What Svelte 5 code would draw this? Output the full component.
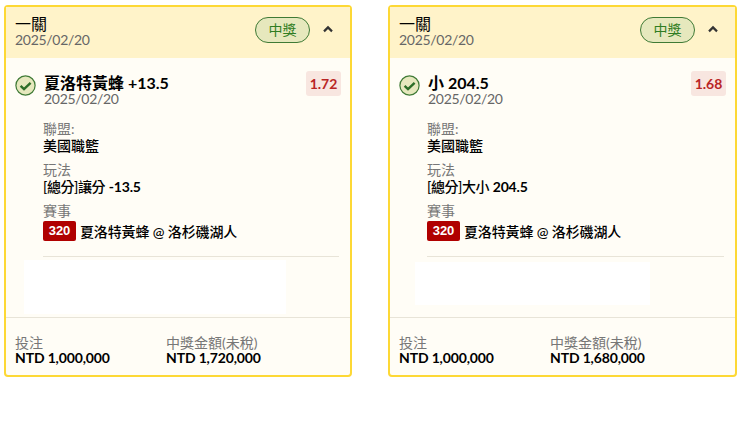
<script lang="ts">
  const tickets = [
    { pick: '夏洛特黃蜂 +13.5', odds: '1.72', market: '[總分]讓分', line: '-13.5', payout: 'NTD 1,720,000', blank: 'wide' },
    { pick: '小 204.5', odds: '1.68', market: '[總分]大小', line: '204.5', payout: 'NTD 1,680,000', blank: 'narrow' }
  ];
</script>

<div class="page">
  {#each tickets as t}
    <section class="card">
      <header class="head">
        <div class="head-text">
          <div class="title">一關</div>
          <div class="date">2025/02/20</div>
        </div>
        <span class="won">中獎</span>
        <svg class="chevron" width="12" height="8" viewBox="0 0 12 8">
          <path d="M2 6.4 L6 2.4 L10 6.4" fill="none" stroke="#333" stroke-width="2.2" />
        </svg>
      </header>

      <div class="body">
        <div class="pick-row">
          <svg class="check" width="21" height="21" viewBox="0 0 21 21">
            <circle cx="10.5" cy="10.5" r="9.6" fill="#e6e8bd" stroke="#3f7a35" stroke-width="1.2" />
            <path d="M5.6 10.8 L9 14 L15.6 7.8" fill="none" stroke="#2c6e27" stroke-width="2.4" />
          </svg>
          <div class="pick-text">
            <div class="pick">{t.pick}</div>
            <div class="date">2025/02/20</div>
          </div>
          <span class="odds">{t.odds}</span>
        </div>

        <div class="details">
          <div class="label">聯盟:</div>
          <div class="value">美國職籃</div>
          <div class="label">玩法</div>
          <div class="value"><span class="market">{t.market}</span> <b>{t.line}</b></div>
          <div class="label">賽事</div>
          <div class="value game"><span class="code">320</span>夏洛特黃蜂 @ 洛杉磯湖人</div>
        </div>
        <div class="rule"></div>
        <div class="blank {t.blank}"></div>
      </div>

      <footer class="foot">
        <div class="amount">
          <div class="label">投注</div>
          <div class="money">NTD 1,000,000</div>
        </div>
        <div class="amount">
          <div class="label">中獎金額(未稅)</div>
          <div class="money">{t.payout}</div>
        </div>
      </footer>
    </section>
  {/each}
</div>

<style>
  :global(body) {
    background: #fff;
    font-family: Lato, "Noto Sans CJK TC", sans-serif;
  }
  .page {
    display: grid;
    grid-template-columns: 348px 349px;
    gap: 36px;
    padding: 5px 0 0 4px;
  }
  .card {
    height: 372px;
    box-sizing: border-box;
    border: 2px solid #fdd835;
    border-radius: 4px;
    background: #fffdf6;
    display: flex;
    flex-direction: column;
  }
  .head {
    height: 51px;
    flex: none;
    background: #fff3c9;
    display: flex;
    align-items: flex-start;
    padding: 8px 16px 0 9px;
    box-sizing: border-box;
  }
  .head-text {
    flex: 1;
  }
  .title {
    font-size: 16px;
    line-height: 17px;
    color: #000;
  }
  .date {
    font-size: 14px;
    line-height: 16px;
    letter-spacing: -0.3px;
    color: #666;
  }
  .won {
    width: 55px;
    height: 26px;
    box-sizing: border-box;
    border: 1px solid #3f7a35;
    border-radius: 13px;
    background: #e6e8bd;
    color: #2f7d22;
    font-size: 14px;
    line-height: 24px;
    text-align: center;
    margin: 2px 12px 0 0;
  }
  .chevron {
    margin-top: 10px;
  }
  .body {
    flex: 1;
    padding: 0 9px;
    border-bottom: 1px solid #e8e4d8;
  }
  .pick-row {
    display: flex;
    align-items: flex-start;
    padding-top: 13px;
  }
  .check {
    margin: 4px 8px 0 0;
    flex: none;
  }
  .pick-text {
    flex: 1;
    padding-top: 3px;
  }
  .pick {
    font-size: 16px;
    line-height: 17px;
    font-weight: 700;
    color: #000;
  }
  .odds {
    background: #f8e6e0;
    color: #b92525;
    font-size: 14px;
    font-weight: 700;
    line-height: 25px;
    width: 35px;
    text-align: center;
    border-radius: 3px;
  }
  .details {
    padding: 14px 0 0 28px;
  }
  .label {
    font-size: 14px;
    line-height: 16px;
    color: #777;
  }
  .value {
    font-size: 14px;
    line-height: 17px;
    font-weight: 500;
    color: #000;
    margin-bottom: 8px;
  }
  .value b {
    font-weight: 700;
    letter-spacing: -0.2px;
  }
  .market {
    letter-spacing: -0.4px;
  }
  .game {
    display: flex;
    align-items: center;
    margin: 2px 0 0;
    height: 20px;
    letter-spacing: -0.13px;
  }
  .code {
    background: #b00000;
    color: #fff;
    font-family: "Liberation Sans", sans-serif;
    font-weight: 700;
    font-size: 13px;
    line-height: 20px;
    width: 33px;
    flex: none;
    text-align: center;
    border-radius: 2px;
    margin-right: 4px;
  }
  .rule {
    height: 1px;
    margin: 15px 2px 0 28px;
    background: #e8e4d8;
  }
  .blank {
    background: #fff;
  }
  .blank.wide {
    width: 262px;
    height: 54px;
    margin: 3px 0 0 9px;
  }
  .blank.narrow {
    width: 235px;
    height: 43px;
    margin: 5px 0 0 16px;
  }
  .foot {
    height: 57px;
    flex: none;
    display: flex;
    padding: 17px 0 0 9px;
    box-sizing: border-box;
  }
  .amount {
    width: 151px;
  }
  .money {
    font-size: 14px;
    line-height: 14px;
    letter-spacing: -0.15px;
    font-weight: 700;
    color: #000;
  }
</style>
